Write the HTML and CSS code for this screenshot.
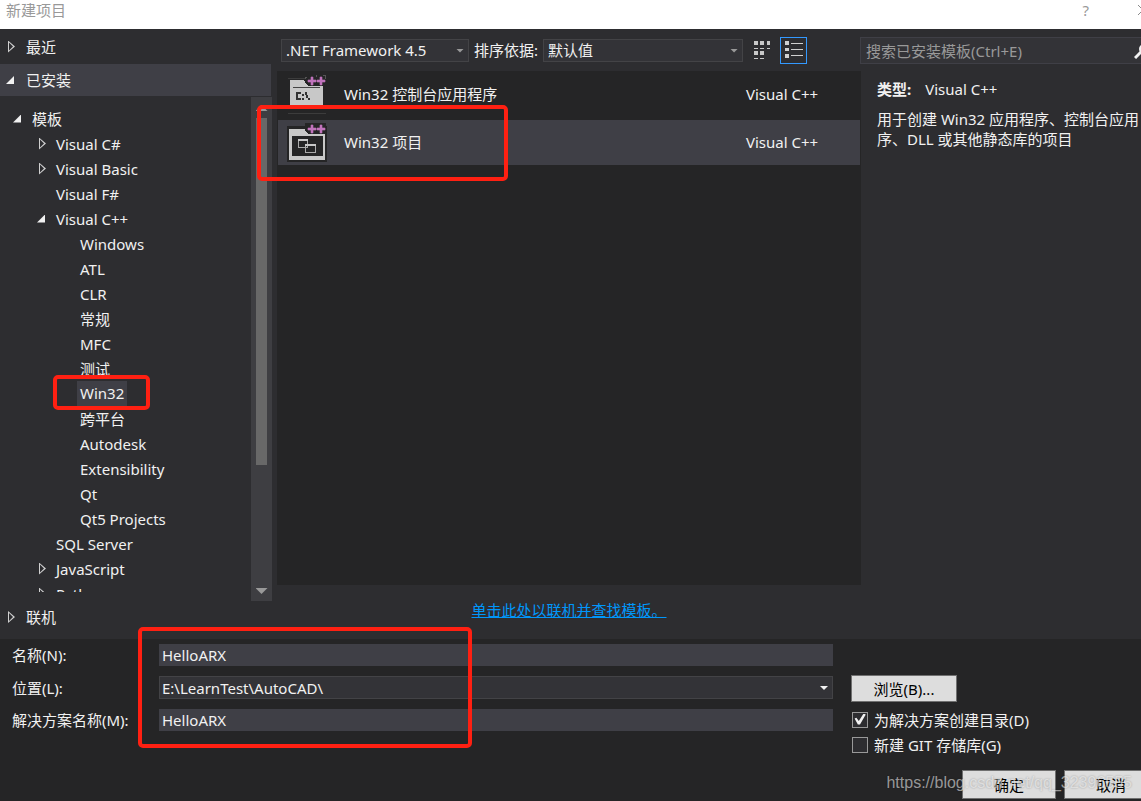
FILE: index.html
```html
<!DOCTYPE html>
<html lang="zh-CN">
<head>
    <meta charset="UTF-8">
    <meta name="viewport" content="width=device-width, initial-scale=1.0">
    <title>新建项目</title>
    <link rel="stylesheet" href="styles.css">
</head>
<body>
    <header class="titlebar">
        <h1>新建项目</h1>
        <button type="button" class="help" aria-label="帮助">?</button>
        <button type="button" class="close" aria-label="关闭">
            <svg width="12" height="12" viewBox="0 0 12 12"><path d="M1 1L11 11M11 1L1 11" stroke="#8a8a8a" fill="none"/></svg>
        </button>
    </header>

    <main class="main">
        <nav class="sidebar">
            <div class="section recent"><span class="arrow closed"></span>最近</div>
            <div class="section installed"><span class="arrow open"></span>已安装</div>
            <div class="tree-wrap">
                <ul class="tree">
                    <li class="level-0"><span class="arrow open"></span>模板</li>
                    <li class="level-1"><span class="arrow closed"></span>Visual C#</li>
                    <li class="level-1"><span class="arrow closed"></span>Visual Basic</li>
                    <li class="level-1"><span class="arrow"></span>Visual F#</li>
                    <li class="level-1"><span class="arrow open"></span>Visual C++</li>
                    <li class="level-2">Windows</li>
                    <li class="level-2">ATL</li>
                    <li class="level-2">CLR</li>
                    <li class="level-2">常规</li>
                    <li class="level-2">MFC</li>
                    <li class="level-2">测试</li>
                    <li class="level-2 marked"><span class="current">Win32</span><span class="mark mark-tree"></span></li>
                    <li class="level-2">跨平台</li>
                    <li class="level-2">Autodesk</li>
                    <li class="level-2">Extensibility</li>
                    <li class="level-2">Qt</li>
                    <li class="level-2">Qt5 Projects</li>
                    <li class="level-1"><span class="arrow"></span>SQL Server</li>
                    <li class="level-1"><span class="arrow closed"></span>JavaScript</li>
                    <li class="level-1"><span class="arrow closed"></span>Python</li>
                </ul>
                <div class="scrollbar">
                    <span class="scroll-up"></span>
                    <span class="scroll-thumb"></span>
                    <span class="scroll-down"></span>
                </div>
            </div>
            <div class="section online"><span class="arrow closed"></span>联机</div>
        </nav>

        <section class="center">
            <div class="toolbar">
                <div class="select framework">
                    <select aria-label=".NET Framework">
                        <option>.NET Framework 4.5</option>
                    </select>
                </div>
                <label for="sort">排序依据:</label>
                <div class="select sort">
                    <select id="sort">
                        <option>默认值</option>
                    </select>
                </div>
                <button type="button" class="view" aria-label="小图标">
                    <svg width="18" height="20" viewBox="0 0 18 20" fill="#c8c8c8" shape-rendering="crispEdges">
                        <path d="M1 1h4v4h-4zM7 1h4v4h-4zM14 1h3v4h-3zM1 8h4v1h-4zM7 8h4v1h-4zM14 8h3v1h-3zM1 11h4v4h-4zM7 11h4v4h-4zM1 18h4v1h-4zM7 18h4v1h-4z"/>
                    </svg>
                </button>
                <button type="button" class="view active" aria-label="列表">
                    <svg width="18" height="20" viewBox="0 0 18 20" fill="#d0d0d0" shape-rendering="crispEdges">
                        <path d="M0 1h4v4h-4zM6 3h12v1h-12zM0 8h4v3h-4zM6 9h12v1h-12zM0 14h4v4h-4zM6 15h12v1h-12z"/>
                    </svg>
                </button>
            </div>

            <ul class="templates">
                <li>
                    <svg class="icon" width="40" height="40" viewBox="0 0 40 40" shape-rendering="crispEdges">
                        <path d="M1 4h17M1 39h38" stroke="#3c3c3c" fill="none"/>
                        <path d="M3 6h14l3 5h16v23H3z" fill="#c8c8c8"/>
                        <path d="M6 13h27v1H6z" fill="#444"/>
                        <path d="M9 18h5v2h-3v4h3v2H9zM15 20h2v2h-2zM15 24h2v2h-2zM18 18h2v3h1v3h2v2h-2v-2h-2v-3h-1z" fill="#333"/>
                        <path d="M18 2h21v10H21l-3-3z" fill="#252526"/>
                        <path d="M18 5V3h2M38 5V1h-2M29 3V1" stroke="#555" fill="none"/>
                        <path d="M24 3h2v3h3v2h-3v3h-2v-3h-3v-2h3zM33 3h2v3h3v2h-3v3h-2v-3h-3v-2h3z" fill="#c074bd" stroke="#c074bd" stroke-width=".6" shape-rendering="auto"/>
                    </svg>
                    <span class="name">Win32 控制台应用程序</span>
                    <span class="lang">Visual C++</span>
                </li>
                <li class="selected">
                    <svg class="icon" width="40" height="40" viewBox="0 0 40 40" shape-rendering="crispEdges">
                        <path d="M0 4h18V1h21v3h1v36H0z" fill="#252526"/>
                        <path d="M2 7h16l3 4h17v27H2z" fill="#c8c8c8"/>
                        <path d="M5 14h31v20H5z" fill="#252526"/>
                        <path d="M11.500 17.500h9v8h-9zM18.500 22.500h10v8h-10z" fill="#252526" stroke="#aaa"/>
                        <path d="M11 17h10v2H11zM18 22h11v2H18z" fill="#c8c8c8"/>
                        <path d="M18 2h21v10H21l-3-3z" fill="#252526"/>
                        <path d="M24 3h2v3h3v2h-3v3h-2v-3h-3v-2h3zM33 3h2v3h3v2h-3v3h-2v-3h-3v-2h3z" fill="#c074bd" stroke="#c074bd" stroke-width=".6" shape-rendering="auto"/>
                    </svg>
                    <span class="name">Win32 项目</span>
                    <span class="lang">Visual C++</span>
                    <span class="mark mark-template"></span>
                </li>
            </ul>
            <p class="online-link"><a href="#">单击此处以联机并查找模板。</a></p>
        </section>

        <aside class="details">
            <div class="search">
                <input type="search" placeholder="搜索已安装模板(Ctrl+E)" aria-label="搜索已安装模板">
                <svg width="16" height="16" viewBox="0 0 16 16"><path d="M1 15L7 9" stroke="#f1f1f1" stroke-width="3"/><circle cx="10" cy="6" r="4" fill="none" stroke="#f1f1f1" stroke-width="2"/></svg>
            </div>
            <p class="type"><b>类型:</b>Visual C++</p>
            <p class="description">用于创建 Win32 应用程序、控制台应用<br>序、DLL 或其他静态库的项目</p>
        </aside>
    </main>

    <form class="project-form">
        <div class="fields">
            <div class="field">
                <label for="name">名称(N):</label>
                <input type="text" id="name" value="HelloARX">
            </div>
            <div class="field">
                <label for="location">位置(L):</label>
                <div class="select location">
                    <select id="location">
                        <option>E:\LearnTest\AutoCAD\</option>
                    </select>
                </div>
            </div>
            <div class="field">
                <label for="solution">解决方案名称(M):</label>
                <input type="text" id="solution" value="HelloARX">
            </div>
            <span class="mark mark-form"></span>
        </div>
        <div class="options">
            <button type="button" class="button browse">浏览(B)...</button>
            <label class="check"><input type="checkbox" checked>为解决方案创建目录(D)</label>
            <label class="check"><input type="checkbox">新建 GIT 存储库(G)</label>
            <div class="actions">
                <button type="submit" class="button">确定</button>
                <button type="button" class="button">取消</button>
            </div>
        </div>
        <span class="watermark">https://blog.csdn.net/qq_32396555</span>
    </form>
</body>
</html>
```

FILE: styles.css
```css
* {
    box-sizing: border-box;
}

body {
    display: flex;
    flex-direction: column;
    height: 100vh;
    margin: 0;
    overflow: hidden;
    font: 15px/20px "Noto Sans", "Noto Sans CJK SC", sans-serif;
    background-color: #2d2d30;
    color: #f1f1f1;
}

h1, p, ul {
    margin: 0;
    padding: 0;
}

ul {
    list-style: none;
}

button, input, select {
    font: inherit;
    color: inherit;
    margin: 0;
}

/* title bar */
.titlebar {
    display: flex;
    align-items: center;
    height: 29px;
    padding: 0 0 10px 6px;
    background: #fff;
    color: #999;
}

.titlebar h1 {
    flex: 1;
    font-size: 15px;
    font-weight: normal;
}

.titlebar button {
    display: flex;
    padding: 0;
    border: none;
    background: none;
}

.titlebar .close {
    margin: 0 -8px 0 48px;
}

.main {
    display: flex;
    flex: 1;
    min-height: 0;
}

/* sidebar */
.sidebar {
    display: flex;
    flex-direction: column;
    width: 272px;
}

.section {
    display: flex;
    align-items: center;
    padding-left: 8px;
}

.recent {
    height: 35px;
}

.installed {
    height: 32px;
    background: #3f3f46;
    margin-right: 1px;
}

.online {
    height: 38px;
    padding-bottom: 6px;
}

.arrow {
    width: 8px;
    margin-right: 10px;
    flex: none;
}

.arrow.open::before {
    content: "";
    display: block;
    width: 8px;
    height: 8px;
    margin-left: -2px;
    background: #f1f1f1;
    clip-path: polygon(100% 0, 100% 100%, 0 100%);
}

.arrow.closed::before {
    content: "";
    display: block;
    width: 7px;
    height: 12px;
    background: #d0d0d0;
    clip-path: polygon(evenodd, 0 0, 7px 6px, 0 12px, 0 0, 1px 2px, 1px 10px, 5px 6px, 1px 2px);
}

.tree-wrap {
    display: flex;
    flex: 1;
    min-height: 0;
    margin-top: 1px;
}

.tree {
    flex: 1;
    margin: 9px 0;
    overflow: hidden;
}

.tree li {
    display: flex;
    align-items: center;
    height: 25px;
}

.tree .arrow {
    margin-right: 9px;
}

.tree .level-0 {
    padding-left: 15px;
}

.tree .level-1 {
    padding-left: 39px;
}

.tree .level-2 {
    padding-left: 80px;
}

.marked {
    position: relative;
}

.current {
    margin-left: -3px;
    padding: 2px 3px 3px 3px;
    background: #3f3f46;
}

.scrollbar {
    display: flex;
    flex-direction: column;
    align-items: center;
    width: 21px;
    padding: 8px 0 7px;
    background: #3e3e42;
}

.scroll-up, .scroll-down {
    width: 12px;
    height: 6px;
    background: #999;
}

.scroll-up {
    clip-path: polygon(50% 0, 100% 100%, 0 100%);
}

.scroll-down {
    margin-top: auto;
    clip-path: polygon(0 0, 100% 0, 50% 100%);
}

.scroll-thumb {
    width: 11px;
    height: 71%;
    margin-top: 7px;
    background: #686868;
}

/* template list */
.center {
    display: flex;
    flex-direction: column;
    flex: 1;
    padding-left: 5px;
}

.toolbar {
    display: flex;
    align-items: center;
    height: 42px;
    padding-left: 4px;
}

.toolbar label {
    margin: 0 5px;
    white-space: nowrap;
}

.select {
    position: relative;
}

.select select {
    display: block;
    width: 100%;
    height: 23px;
    padding: 0 16px 0 4px;
    border: 1px solid #434346;
    border-radius: 0;
    background: #333337;
    appearance: none;
}

.select::after {
    content: "";
    position: absolute;
    top: 10px;
    right: 5px;
    width: 8px;
    height: 4px;
    background: #999;
    clip-path: polygon(0 0, 100% 0, 50% 100%);
}

.framework {
    width: 188px;
}

.sort {
    width: 200px;
}

.view {
    display: flex;
    align-items: center;
    justify-content: center;
    width: 27px;
    height: 27px;
    margin-left: 5px;
    padding: 0;
    border: 1px solid transparent;
    background: none;
}

.view.active {
    border-color: #3399ff;
}

.templates {
    flex: 1;
    padding: 1px 1px 0 1px;
    background: #252526;
}

.templates li {
    display: flex;
    align-items: center;
    height: 45px;
    margin-bottom: 3px;
    padding: 0 36px 0 9px;
}

.templates .selected {
    position: relative;
    background: #3f3f46;
}

.icon {
    margin: 0 17px 2px 0;
}

.name {
    flex: 1;
    padding-bottom: 2px;
}

.lang {
    width: 78px;
    padding-bottom: 2px;
    white-space: nowrap;
}

.online-link {
    height: 54px;
    padding-top: 15px;
    text-align: center;
}

.online-link a {
    color: #0097fb;
}

/* details */
.details {
    width: 280px;
    padding-top: 8px;
    white-space: nowrap;
}

.search {
    display: flex;
    align-items: center;
    height: 27px;
    margin: 0 -10px 0 -1px;
    border: 1px solid #3f3f46;
    background: #333337;
}

.search input {
    flex: 1;
    min-width: 0;
    padding: 0 5px;
    border: none;
    background: none;
}

.search input::placeholder {
    color: #999;
}

.type {
    margin: 15px 0 10px 16px;
}

.type b {
    margin-right: 14px;
}

.description {
    margin-left: 16px;
}

/* name and location */
.project-form {
    position: relative;
    display: flex;
    gap: 18px;
    padding: 5px 0 2px 12px;
    background: #252526;
}

.fields {
    position: relative;
    display: flex;
    flex-direction: column;
    flex: 1;
    gap: 10px;
}

.field {
    display: flex;
    align-items: center;
}

.field label {
    width: 147px;
}

.field input {
    flex: 1;
    height: 22px;
    padding: 0 3px;
    border: none;
    background: #3f3f46;
}

.location {
    flex: 1;
}

.location select {
    padding-left: 2px;
}

.location::after {
    background: #f1f1f1;
}

.options {
    width: 290px;
    padding-top: 31px;
}

.button {
    display: flex;
    align-items: center;
    justify-content: center;
    width: 94px;
    height: 29px;
    padding: 0;
    border: 1px solid #707070;
    background: #ddd;
    color: #000;
}

.browse {
    width: 106px;
    height: 27px;
    margin-bottom: 5px;
}

.check {
    display: flex;
    align-items: center;
    height: 25px;
}

.check input {
    display: flex;
    width: 16px;
    height: 16px;
    margin: 0 6px 0 1px;
    border: 1px solid #999;
    background: #2d2d30;
    appearance: none;
}

.check input:checked::before {
    content: "";
    width: 12px;
    height: 11px;
    margin: 1px;
    background: #f1f1f1;
    clip-path: polygon(5% 45%, 20% 38%, 40% 68%, 80% 0, 98% 8%, 50% 100%, 32% 100%);
}

.actions {
    display: flex;
    justify-content: flex-end;
    gap: 8px;
    margin: 13px -17px 0 0;
}

/* highlight boxes */
.mark {
    position: absolute;
    border: 4px solid #ff2012;
    border-radius: 5px;
    pointer-events: none;
    z-index: 1;
}

.mark-tree {
    top: -6px;
    left: 53px;
    width: 97px;
    height: 35px;
}

.mark-template {
    top: -15px;
    left: -21px;
    width: 251px;
    height: 76px;
}

.mark-form {
    top: -17px;
    left: 126px;
    width: 334px;
    height: 121px;
}

.watermark {
    position: absolute;
    right: 9px;
    bottom: 8px;
    font-family: "Liberation Sans", Arial, sans-serif;
    font-size: 16px;
    color: rgba(255, 255, 255, 0.55);
    text-shadow: 0 0 2px rgba(0, 0, 0, 0.3);
    pointer-events: none;
}
```
